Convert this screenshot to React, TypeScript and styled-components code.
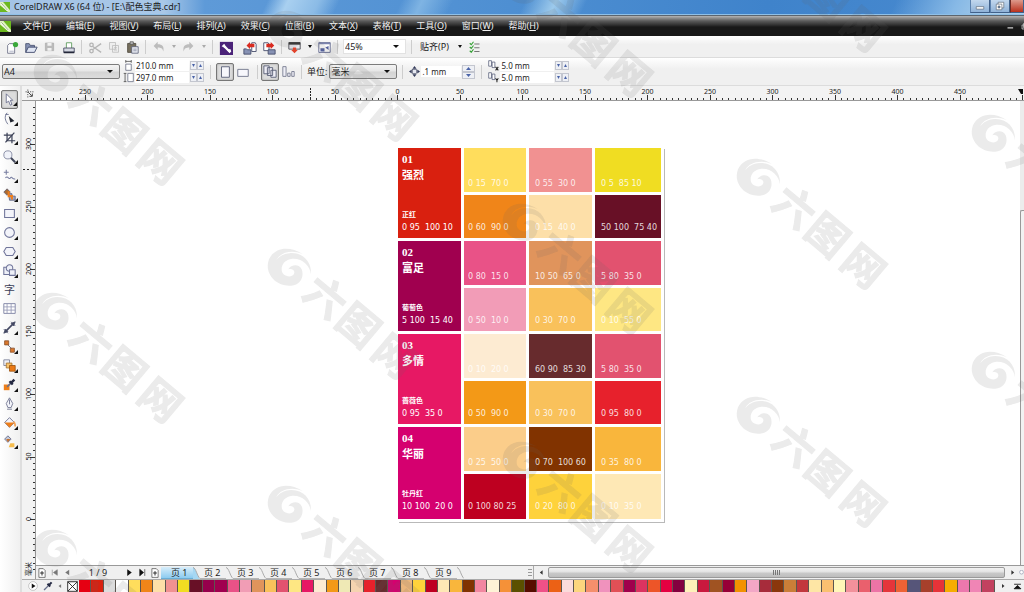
import React from "react";
import styled, { createGlobalStyle, css } from "styled-components";

const GlobalStyle = createGlobalStyle`
  * { box-sizing: border-box; }
  body { margin: 0; overflow: hidden; background: #f0f0f0; }
  body, button, input, select {
    font-family: "Noto Sans", "Noto Sans CJK SC", sans-serif;
    font-size: 9px;
    color: #1c1c1c;
  }
  button { border: 0; padding: 0; background: none; }
`;

/* ---------- icons ---------- */

const glyphs: Record<string, React.ReactNode> = {
  corel: (
    <>
      <rect width="16" height="16" fill="#6cb820" />
      <path d="M0 0h5l11 13v3h-3L0 5z" fill="#dff2c0" />
      <path d="M2 1l11 11-1 3L1 4z" fill="#fff" />
      <path d="M2 2l10 11" stroke="#5c8d2b" />
    </>
  ),
  newDoc: (
    <>
      <path d="M3 5l2-2h6v11H3z" fill="#fff" stroke="#6f7288" />
      <path d="M5 12h5" stroke="#c9cbd8" strokeWidth="2" />
      <circle cx="12" cy="4" r="3" fill="#3ba83b" />
    </>
  ),
  open: (
    <>
      <path d="M2 13V3h4l1 2h5v3" fill="#8792b4" stroke="#47506f" />
      <path d="M2 13l3-6h10l-3 6z" fill="#dfe5f3" stroke="#3d4668" />
    </>
  ),
  save: (
    <>
      <path d="M2 3h12v11H2z" fill="#bbb" stroke="#aaa" />
      <path d="M5 3h6v4H5zM5 10h6v4H5z" fill="#f1f1f1" />
    </>
  ),
  print: (
    <>
      <path d="M5 8V2h6v6" fill="#fff" stroke="#5b9a5b" />
      <path d="M2 8h12v5H2z" fill="#d5d8e2" stroke="#4b4f66" />
      <path d="M2 13h12" stroke="#25283a" strokeWidth="2" />
    </>
  ),
  cut: (
    <g fill="none" stroke="#b5b5b5" strokeWidth="1.5">
      <path d="M15 3L5 10M15 13L5 6" />
      <circle cx="4" cy="4.500" r="2" />
      <circle cx="4" cy="11.500" r="2" />
    </g>
  ),
  copy: (
    <g fill="#eee" stroke="#b9b9b9">
      <path d="M2 2h8v9H2zM6 6h8v9H6z" />
      <path d="M8 9h4M8 12h4" />
    </g>
  ),
  paste: (
    <>
      <path d="M2 3h10v11H2z" fill="#766f5d" stroke="#4c473c" />
      <path d="M5 1h4v3H5z" fill="#c9c9c9" stroke="#555" />
      <path d="M7 7h8v8H7z" fill="#e9ebf2" stroke="#5a5f78" />
      <path d="M9 10h4M9 12h4" stroke="#8a8fa5" />
    </>
  ),
  undo: <path d="M2 6l5-5v3c6 0 8 3 7 9-1-4-3-5-7-5v3z" fill="#bcbcbc" />,
  redo: <path d="M14 6L9 1v3C3 4 1 7 2 13c1-4 3-5 7-5v3z" fill="#bcbcbc" />,
  connect: (
    <>
      <rect x="1" y="1" width="15" height="15" fill="#4b2379" />
      <path d="M5 5l7 7" stroke="#fff" strokeWidth="2.500" />
      <path d="M3 6l3-3 2 4-1 1zM9 10l4-1 1 3-2 2z" fill="#fff" />
    </>
  ),
  importIcon: (
    <>
      <path d="M1 9h3l1 1h4v5H1z" fill="#8792b4" stroke="#454c6a" />
      <path d="M10 2h4l1 2v8h-5z" fill="#fff" stroke="#454c6a" />
      <path d="M13 3H8V1L4 5l4 4V7h5z" fill="#d92b20" />
    </>
  ),
  exportIcon: (
    <>
      <path d="M2 2h5l1 2v7H2z" fill="#fff" stroke="#454c6a" />
      <path d="M7 10h8v5H7z" fill="#8792b4" stroke="#454c6a" />
      <path d="M5 7h5v2l4-4-4-4v2H5z" fill="#d92b20" />
    </>
  ),
  launcher: (
    <>
      <path d="M1 2h14v8H1z" fill="#e8e9ee" stroke="#3d3d46" />
      <path d="M1 3h14" stroke="#333" strokeWidth="3" />
      <path d="M6 8h4v3h2l-4 4-4-4h2z" fill="#e2432c" />
    </>
  ),
  welcome: (
    <>
      <path d="M1 2h14v12H1z" fill="#fff" stroke="#4e5580" />
      <path d="M1 3h14" stroke="#7b83ae" strokeWidth="2" />
      <path d="M3 9h5v4H3zM9 8l4-2v5z" fill="#5360a0" />
    </>
  ),
  options: (
    <>
      <path d="M7 4h7M7 9h7M7 14h7" stroke="#777" strokeWidth="1.500" />
      <path d="M1 3l2 2 3-4M1 8l2 2 3-4M1 13l2 2 3-4" fill="none" stroke="#35a035" strokeWidth="1.500" />
    </>
  ),
  pageW: (
    <>
      <path d="M4 6h8v9H4z" fill="#fff" stroke="#555a72" />
      <path d="M4 2h8M4 0v4M12 0v4" stroke="#333" />
    </>
  ),
  pageH: (
    <>
      <path d="M7 2h8v12H7z" fill="#fff" stroke="#555a72" />
      <path d="M3 2v12M1 2h4M1 14h4" stroke="#333" />
    </>
  ),
  portrait: <path d="M4 2h9v12H4z" fill="#f7f7fc" stroke="#555a72" />,
  landscape: <path d="M2 5h12v8H2z" fill="#f7f7fc" stroke="#6d7188" />,
  allPages: (
    <g fill="#eeeef6" stroke="#555a72">
      <path d="M1 1h6v9H1zM5 3h6v9H5zM9 6h6v8H9z" />
    </g>
  ),
  curPage: (
    <g fill="#eeeef6" stroke="#6d7188">
      <path d="M1 2h4v12H1zM7 10h3v4H7zM12 8h3v6h-3z" />
    </g>
  ),
  nudge: (
    <>
      <path d="M8 0l3 4H5zM8 16l3-4H5zM0 8l4-3v6zM16 8l-4-3v6z" fill="#333a5a" />
      <rect x="5" y="5" width="6" height="6" fill="#e7e9f2" stroke="#555a72" />
    </>
  ),
  dupX: (
    <>
      <path d="M1 1h4v8H1zM6 3h4v8H6z" fill="#fff" stroke="#454c6a" />
      <path d="M11 10l4 5M15 10l-4 5" stroke="#222" strokeWidth="1.500" />
    </>
  ),
  dupY: (
    <>
      <path d="M1 1h4v8H1zM6 3h4v8H6z" fill="#fff" stroke="#454c6a" />
      <path d="M11 9l2 3 2-3M13 12v3" fill="none" stroke="#222" strokeWidth="1.500" />
    </>
  ),
  pick: <path d="M4 1l8 8H9l2 5-2 1-2-5-3 2z" fill="#fff" stroke="#5e6384" />,
  shape: (
    <>
      <path d="M5 1C1 6 3 11 6 15M3 3h4" fill="none" stroke="#5c6284" />
      <path d="M7 5l7 6-5 2z" fill="#20242f" />
    </>
  ),
  crop: (
    <g fill="none" stroke="#3b4056" strokeWidth="1.500">
      <path d="M5 2v10h10M1 5h10v10" />
      <path d="M3 14L14 2" />
    </g>
  ),
  zoom: (
    <>
      <path d="M9 9l6 6" stroke="#43485c" strokeWidth="2.500" />
      <circle cx="6" cy="6" r="5" fill="#f0f2f9" stroke="#777d98" />
    </>
  ),
  freehand: (
    <g fill="none" stroke="#777da0" strokeWidth="1.300">
      <path d="M4 1v6M1 4h6" />
      <path d="M3 11c3-4 4 3 6 0s3 3 6 1" />
    </g>
  ),
  smartFill: (
    <>
      <path d="M1 5l4-4 4 4-4 4z" fill="#a96a33" stroke="#5d5f75" />
      <path d="M7 7h4v3h4v5H8z" fill="#9fa7c6" stroke="#555a78" />
      <path d="M7 4v6h4v4" fill="none" stroke="#ef7e1b" strokeWidth="2.500" />
    </>
  ),
  rect: <path d="M2 3h12v10H2z" fill="#f3f4fa" stroke="#70759a" strokeWidth="1.300" />,
  ellipse: <circle cx="8" cy="8" r="6" fill="#f3f4fa" stroke="#70759a" strokeWidth="1.300" />,
  polygon: <path d="M4 3h8l3 5-3 5H4L1 8z" fill="#f3f4fa" stroke="#70759a" strokeWidth="1.300" />,
  shapes: (
    <g fill="#eef0f8" stroke="#70759a" strokeWidth="1.300">
      <path d="M1 4h8v9H1z" />
      <circle cx="8" cy="5" r="4" />
      <path d="M8 7h7v7H8z" />
    </g>
  ),
  table: (
    <>
      <path d="M1 2h14v12H1z" fill="#fff" stroke="#70759a" />
      <path d="M1 6h14M1 10h14M5 2v12M10 2v12" stroke="#9296b4" />
    </>
  ),
  dimension: (
    <>
      <path d="M3 13L13 3" stroke="#434863" strokeWidth="2" />
      <path d="M1 10l5 5M10 1l5 5M1 15l2-5 3 3zM15 1l-2 5-3-3z" stroke="#434863" fill="#434863" />
    </>
  ),
  connector: (
    <>
      <path d="M4 4l8 8" stroke="#5a5f78" />
      <path d="M2 1h5v5H2zM9 10h5v5H9z" fill="#d9772c" stroke="#87502b" />
    </>
  ),
  interactive: (
    <>
      <path d="M1 1h7v7H1z" fill="#eef0f8" stroke="#777c96" />
      <path d="M4 5h7v6H4z" fill="#f7c36e" stroke="#a3702b" />
      <path d="M8 8h7v7H8z" fill="#ea7915" stroke="#9a510d" />
    </>
  ),
  eyedropper: (
    <>
      <path d="M1 8h7v7H1z" fill="#ee7f1a" />
      <path d="M5 11l6-6" stroke="#6a7089" strokeWidth="2" />
      <path d="M8 4l4 4M10 6l4-4" stroke="#242942" strokeWidth="3" />
    </>
  ),
  dropper: (
    <>
      <path d="M3 13l7-7" stroke="#69708b" strokeWidth="2" />
      <path d="M8 4l4 4M10 6l4-4" stroke="#242942" strokeWidth="3" />
    </>
  ),
  pen: (
    <>
      <path d="M8 1l4 7-2 5H6L4 8zM5 15h6" fill="#f3f4fa" stroke="#666b88" />
      <path d="M8 3v6" stroke="#666b88" />
    </>
  ),
  fill: (
    <>
      <path d="M2 8l6-6 6 6-6 6z" fill="#f3f4fa" stroke="#5e6384" />
      <path d="M2 8h12l-6 6z" fill="#ee7f1a" />
      <path d="M13 7c2 1 2 3 2 6" stroke="#f3a052" strokeWidth="2" fill="none" />
    </>
  ),
  meshFill: (
    <>
      <path d="M2 5l4-4 4 4-4 4z" fill="#c5cad9" stroke="#5e6384" />
      <path d="M4 5h5l-3 4z" fill="#c4712f" />
      <path d="M7 15l2-5h5v5z" fill="#f6bd4e" />
    </>
  ),
  origin: (
    <>
      <path d="M5 1v14M1 5h14" stroke="#333" strokeWidth="1.500" strokeDasharray="2 2" />
      <path d="M6 6l6 6M13 8v5H8" stroke="#222" strokeWidth="1.500" fill="none" />
    </>
  ),
  addPage: (
    <>
      <path d="M3 1h7l3 3v11H3z" fill="#fff" stroke="#333" />
      <path d="M8 5v7M5 8h6" stroke="#222" strokeWidth="1.500" />
    </>
  ),
  first: <path d="M4 3v10M13 3v10L6 8z" fill="#777" stroke="#777" />,
  prev: <path d="M11 3v10L4 8z" fill="#777" />,
  next: <path d="M4 2v12l8-6z" fill="#111" />,
  last: <path d="M12 2v12M3 2v12l7-6z" fill="#111" stroke="#111" />,
  left: <path d="M10 4v8L5 8z" fill="#333" />,
  right: <path d="M6 4v8l5-4z" fill="#333" />,
  play: (
    <>
      <circle cx="8" cy="8" r="7" fill="#fff" stroke="#aaa" />
      <path d="M6 4v8l6-4z" fill="#111" />
    </>
  ),
  none: <path d="M1 1h14v14H1zM1 1l14 14M15 1L1 15" fill="#fff" stroke="#222" strokeWidth="1.300" />,
  expand: <path d="M2 4h12M8 6l6 6H2z" fill="#111" stroke="#111" strokeWidth="1.500" />,
  magnifier: <circle cx="8" cy="7" r="6" fill="#fff" stroke="#6a7090" strokeWidth="1.500" />,
  min: <path d="M2 9h12v4H2z" fill="#fff" stroke="#55606e" />,
  restore: (
    <>
      <path d="M5 2h9v9H5z" fill="#fff" stroke="#55606e" />
      <path d="M2 5h9v9H2z" fill="#fff" stroke="#55606e" />
      <path d="M5 8h3v3H5z" fill="#6d8db3" stroke="#55606e" />
    </>
  ),
  docMin: <path d="M4 11h9" stroke="#ccc" strokeWidth="2" />,
  docRestore: <path d="M5 3h9v8H5zM2 6h8v8H2z" fill="#333" stroke="#ccc" strokeWidth="1.500" />,
};

const Icon = ({ name, size = 14 }: { name: string; size?: number }) => (
  <svg width={size} height={size} viewBox="0 0 16 16" fill="none" aria-hidden="true">
    {glyphs[name]}
  </svg>
);

const Caret = ({ up, color = "#111", w = 5 }: { up?: boolean; color?: string; w?: number }) => (
  <svg width={w} height={3} viewBox="0 0 6 3" preserveAspectRatio="none" aria-hidden="true">
    <path d={up ? "M0 3h6L3 0z" : "M0 0h6L3 3z"} fill={color} />
  </svg>
);

/* ---------- frame ---------- */

const Window = styled.div`
  display: flex;
  flex-direction: column;
  height: 100vh;
  overflow: hidden;
  background: #f0f0f0;
`;

const TitleBar = styled.header`
  display: flex;
  align-items: center;
  height: 15px;
  flex: none;
  border-bottom: 1px solid #8fc0e8;
  background:
    linear-gradient(115deg, transparent 26%, #a9d0f0 28%, #8bbbe6 31%, transparent 33%, transparent 39%, #7fb4e3 41%, transparent 44%, transparent 51%, #9dcaec 54%, transparent 57%, transparent 87%, #87b9e6 93%, #a9cdea 97%),
    linear-gradient(90deg, #a3c3e6, #a9c8e8 16%, #5e9ad8 20%, #4e8fd2 50%, #3f83cb 75%, #4a8bd0);
`;

const Title = styled.h1`
  flex: 1;
  margin: 0 0 0 4px;
  font-size: 9px;
  line-height: 14px;
  font-weight: 400;
  white-space: pre;
`;

const WinButton = styled.button<{ $close?: boolean }>`
  display: grid;
  place-items: center;
  align-self: flex-start;
  width: ${(p) => (p.$close ? 14 : 20)}px;
  height: 13px;
  border: 1px solid #41618a;
  border-top: 0;
  border-left: ${(p) => (p.$close ? "1px solid #6d2b24" : "1px solid #5d82ae")};
  background: ${(p) => (p.$close ? "linear-gradient(#dd9a8c, #b9301c)" : "linear-gradient(#c3d8ee, #8fb2d8)")};
`;

const MenuBar = styled.nav`
  display: flex;
  align-items: center;
  height: 21px;
  flex: none;
  border-top: 1px solid #5c656e;
  background: linear-gradient(#b4b4b4, #5a5a5a 25%, #303030 45%, #181818 55%, #181818);
`;

const MenuList = styled.div`
  display: flex;
  flex: 1;
  gap: 15px;
  margin-left: 12px;
`;

const MenuItem = styled.button`
  color: #f0f0f0;
  line-height: 14px;
  white-space: nowrap;
`;

const Bar = styled.div<{ $h: number }>`
  display: flex;
  align-items: center;
  flex: none;
  height: ${(p) => p.$h}px;
  padding-left: 2px;
  border-bottom: 1px solid #dcdcdc;
  background: linear-gradient(#fff, #f0f0f0 40%);
`;

const Separator = styled.span`
  flex: none;
  width: 7px;
  height: 14px;
  background: linear-gradient(#cdcdcd, #cdcdcd) center / 1px 100% no-repeat;
`;

const ToolButton = styled.button<{ $w?: number }>`
  display: grid;
  place-items: center;
  flex: none;
  width: ${(p) => p.$w ?? 19}px;
  height: 12px;
`;

const pressed = css`
  border: 1px solid #777;
  border-radius: 2px;
  background: #dcdcdc;
  box-shadow: inset 0 0 2px #999;
`;

const ToggleButton = styled.button<{ $on?: boolean }>`
  display: grid;
  place-items: center;
  flex: none;
  width: 18px;
  height: 18px;
  ${(p) => p.$on && pressed}
`;

const Space = styled.span<{ $w: number }>`
  flex: none;
  width: ${(p) => p.$w}px;
`;

const TextButton = styled.button`
  display: flex;
  align-items: center;
  line-height: 14px;
  white-space: nowrap;
`;

/* ---------- form fields ---------- */

const SelectBox = styled.span<{ $w: number; $raised?: boolean }>`
  display: grid;
  grid-template-columns: 1fr 12px;
  align-items: center;
  flex: none;
  width: ${(p) => p.$w}px;
  height: 15px;
  border: 1px solid ${(p) => (p.$raised ? "#7c7c7c" : "#e2e2e2")};
  border-radius: ${(p) => (p.$raised ? 2 : 0)}px;
  background: ${(p) => (p.$raised ? "linear-gradient(#f4f4f4, #e6e6e6 48%, #d4d4d4 52%, #dcdcdc)" : "#fff")};
  & > select {
    grid-area: 1 / 1 / 2 / 3;
    appearance: none;
    width: 100%;
    height: 13px;
    padding: 0 12px 0 1px;
    border: 0;
    background: none;
  }
  & > svg { grid-area: 1 / 2; pointer-events: none; }
`;

const Picker = ({ label, value, options, w, raised }: { label: string; value: string; options: string[]; w: number; raised?: boolean }) => (
  <SelectBox $w={w} $raised={raised}>
    <select aria-label={label} defaultValue={value}>
      {options.map((o) => <option key={o}>{o}</option>)}
    </select>
    <Caret w={6} />
  </SelectBox>
);

const FieldPair = styled.div`
  display: flex;
  flex-direction: column;
`;

const Field = styled.label<{ $w: number }>`
  display: flex;
  align-items: center;
  height: 12px;
  & > input {
    width: ${(p) => p.$w}px;
    height: 11px;
    margin-left: 1px;
    padding: 0 1px;
    border: 0;
    background: #fff;
    font-size: 8px;
    line-height: 11px;
  }
`;

const SpinnerBox = styled.span<{ $stacked?: boolean }>`
  display: flex;
  flex-direction: ${(p) => (p.$stacked ? "column" : "row")};
  margin-left: 1px;
  & > button {
    display: grid;
    place-items: center;
    width: ${(p) => (p.$stacked ? 13 : 7)}px;
    height: ${(p) => (p.$stacked ? 7 : 9)}px;
    border: 1px solid #c3c6cf;
    background: #eef0f5;
  }
`;

const Spinner = ({ stacked }: { stacked?: boolean }) => {
  const up = <button key="u" type="button" aria-label="增加"><Caret up color="#4a63a8" w={stacked ? 5 : 3} /></button>;
  const down = <button key="d" type="button" aria-label="减少"><Caret color="#4a63a8" w={stacked ? 5 : 3} /></button>;
  return <SpinnerBox $stacked={stacked}>{stacked ? [up, down] : [down, up]}</SpinnerBox>;
};

const NumberField = ({ icon, label, value, w, stacked }: { icon: string; label: string; value: string; w: number; stacked?: boolean }) => (
  <Field $w={w}>
    <Icon name={icon} size={11} />
    <input aria-label={label} defaultValue={value} />
    <Spinner stacked={stacked} />
  </Field>
);

/* ---------- workspace ---------- */

const Workspace = styled.div`
  display: flex;
  flex: 1;
  min-height: 0;
`;

const Toolbox = styled.aside`
  display: flex;
  flex-direction: column;
  flex: none;
  width: 22px;
  padding: 4px 0 0 1px;
  border-right: 2px solid #dedede;
  background: linear-gradient(90deg, #fff, #f0f0f0);
`;

const Tool = styled.button<{ $on?: boolean }>`
  display: grid;
  place-items: center;
  position: relative;
  flex: none;
  width: 17px;
  height: 19px;
  font-size: 11px;
  line-height: 14px;
  color: #3c4058;
  ${(p) => p.$on && pressed}
  & > .flyout { position: absolute; right: 0; bottom: 2px; }
`;

const Main = styled.div`
  display: flex;
  flex-direction: column;
  flex: 1;
  min-width: 0;
`;

const RulerRow = styled.div`
  display: flex;
  flex: none;
  height: 15px;
  border-bottom: 1px solid #999;
  background: #f3f3f3;
`;

const Corner = styled.div`
  display: grid;
  place-items: center;
  width: 14px;
`;

const RulerTop = styled.svg`
  flex: 1;
  min-width: 0;
  height: 14px;
`;

const Body = styled.div`
  display: flex;
  flex: 1;
  min-height: 0;
`;

const RulerSide = styled.svg`
  flex: none;
  width: 14px;
  height: 100%;
  border-right: 1px solid #999;
  background: #f3f3f3;
`;

const rulerFont = { fontFamily: '"Noto Sans", "Noto Sans CJK SC", sans-serif', fontSize: 7, fill: "#222" } as const;

const STEP = 62.5;

const HorizontalRuler = () => {
  const zero = 361.5;
  const ticks = Array.from({ length: 158 }, (_, i) => i - 57);
  return (
    <RulerTop aria-label="水平标尺">
      {ticks.map((i) => {
        const x = Math.floor(zero + (i * STEP) / 10);
        const len = i % 10 === 0 ? 5 : 2;
        return <rect key={i} x={x} y={14 - len} width={1} height={len} fill="#333" />;
      })}
      {ticks.filter((i) => i % 10 === 0 && i < 100).map((i) => (
        <text key={i} x={zero + (i * STEP) / 10} y={8} textAnchor="middle" {...rulerFont}>{Math.abs(i * 5)}</text>
      ))}
      <path d="M274.500 2v12" stroke="#222" strokeDasharray="2 1" />
      <path d="M982 3h5v5h-2z" fill="#111" />
    </RulerTop>
  );
};

const VerticalRuler = () => {
  const zero = 418;
  const ticks = Array.from({ length: 76 }, (_, i) => i - 8);
  return (
    <RulerSide aria-label="垂直标尺">
      {ticks.map((i) => {
        const y = Math.round(zero - (i * STEP) / 10);
        const len = i % 10 === 0 ? 5 : 2;
        return <rect key={i} x={13 - len} y={y} width={len} height={1} fill="#333" />;
      })}
      {ticks.filter((i) => i % 10 === 0).map((i) => {
        const y = zero - (i * STEP) / 10;
        return <text key={i} x={0} y={0} textAnchor="middle" transform={`translate(9 ${y}) rotate(-90)`} {...rulerFont}>{i * 5}</text>;
      })}
      <text textAnchor="middle" transform="translate(9 468) rotate(-90)" {...rulerFont}>毫米</text>
      <path d="M1 68.500h12" stroke="#222" strokeDasharray="2 2" />
    </RulerSide>
  );
};

const Stage = styled.div`
  display: flex;
  flex-direction: column;
  flex: 1;
  min-width: 0;
`;

const CanvasRow = styled.div`
  display: flex;
  flex: 1;
  min-height: 0;
`;

const Canvas = styled.main`
  flex: 1;
  padding: 47px 0 0 362px;
  background: #fff;
  overflow: hidden;
`;

const VScroll = styled.div`
  flex: none;
  width: 4px;
  padding-top: 109px;
  background: #ececec;
  &::after {
    content: "";
    display: block;
    height: 100%;
    border: 1px solid #999;
    border-right: 0;
    border-radius: 2px 0 0 0;
    background: #f2f2f2;
  }
`;

/* ---------- colour sheet ---------- */

const Sheet = styled.div`
  display: grid;
  gap: 3px;
  width: 266px;
  padding: 0 3px 3px 0;
  background: #fff;
  box-shadow: 1px 1px 0 #b9b9b9;
`;

const Scheme = styled.section<{ $last: boolean }>`
  display: grid;
  grid-template-columns: 63px 62px 63px 66px;
  grid-template-rows: 44px ${(p) => (p.$last ? 45 : 43)}px;
  gap: 3px;
`;

const Lead = styled.div<{ $c: string }>`
  grid-row: span 2;
  display: flex;
  flex-direction: column;
  padding: 5px 4px 0;
  background: ${(p) => p.$c};
  color: #fff;
`;

const Num = styled.span`
  font: bold 11px/12px "Liberation Serif", serif;
`;

const Name = styled.h2`
  margin: 2px 0 0;
  font: bold 11px/14px "Noto Sans CJK SC", sans-serif;
`;

const Sub = styled.span`
  margin-top: 28px;
  font: bold 7px/10px "Noto Sans CJK SC", sans-serif;
`;

const Code = styled.span`
  font: 8px/10px "DejaVu Sans", sans-serif;
  white-space: pre;
`;

const LeadCode = styled(Code)`
  margin-top: 4px;
`;

const Swatch = styled.div<{ $c: string; $low: boolean; $near: boolean }>`
  padding: ${(p) => (p.$low ? 28 : 31)}px 0 0 ${(p) => (p.$near ? 4 : 6)}px;
  line-height: 0;
  background: ${(p) => p.$c};
  color: rgba(255, 255, 255, 0.85);
`;

type SchemeData = { num: string; name: string; sub: string; code: string; color: string; tiles: [string, string][] };

const schemes: SchemeData[] = [
  {
    num: "01", name: "强烈", sub: "正红", code: "0 95  100 10", color: "#d9200f",
    tiles: [["#ffdd5c", "0 15  70 0"], ["#f19191", "0 55  30 0"], ["#f0dd22", "0 5  85 10"], ["#f08519", "0 60  90 0"], ["#fddfa8", "0 15  40 0"], ["#681026", "50 100  75 40"]],
  },
  {
    num: "02", name: "富足", sub: "葡萄色", code: "5 100  15 40", color: "#a0004f",
    tiles: [["#e95287", "0 80  15 0"], ["#e0945c", "10 50  65 0"], ["#e2526f", "5 80  35 0"], ["#f29cb7", "0 50  10 0"], ["#f9c15b", "0 30  70 0"], ["#fee783", "0 10  55 0"]],
  },
  {
    num: "03", name: "多情", sub: "蔷薇色", code: "0 95  35 0", color: "#e71864",
    tiles: [["#fdebd2", "0 10  20 0"], ["#672b2d", "60 90  85 30"], ["#e2526f", "5 80  35 0"], ["#f39917", "0 50  90 0"], ["#f9c15b", "0 30  70 0"], ["#e7212c", "0 95  80 0"]],
  },
  {
    num: "04", name: "华丽", sub: "牡丹红", code: "10 100  20 0", color: "#d5006f",
    tiles: [["#fbcd8a", "0 25  50 0"], ["#813300", "0 70  100 60"], ["#f9b63c", "0 35  80 0"], ["#be0020", "0 100 80 25"], ["#fed23b", "0 20  80 0"], ["#fee8b5", "0 10  35 0"]],
  },
];

const ColourSheet = () => (
  <Sheet>
    {schemes.map((s, n) => (
      <Scheme key={s.num} $last={n === schemes.length - 1}>
        <Lead $c={s.color}>
          <Num>{s.num}</Num>
          <Name>{s.name}</Name>
          <Sub>{s.sub}</Sub>
          <LeadCode>{s.code}</LeadCode>
        </Lead>
        {s.tiles.map(([c, code], i) => (
          <Swatch key={i} $c={c} $low={i > 2} $near={i % 3 === 0}><Code>{code}</Code></Swatch>
        ))}
      </Scheme>
    ))}
  </Sheet>
);

/* ---------- page navigator ---------- */

const BottomRow = styled.div`
  display: flex;
  flex: none;
  height: 14px;
  border-top: 1px solid #999;
  background: #f0f0f0;
`;

const PageNav = styled.nav`
  display: flex;
  align-items: center;
  flex: none;
  width: 498px;
  border-right: 1px solid #aaa;
`;

const PageCount = styled.span`
  width: 50px;
  text-align: center;
  font-size: 9px;
  line-height: 12px;
  white-space: pre;
`;

const Tab = styled.button<{ $on?: boolean }>`
  display: flex;
  align-items: center;
  height: 12px;
  & > span {
    width: ${(p) => (p.$on ? 32 : 26)}px;
    height: 12px;
    padding-left: ${(p) => (p.$on ? 10 : 4)}px;
    text-align: left;
    font-size: 9px;
    line-height: 11px;
    white-space: pre;
    background: ${(p) => (p.$on ? "linear-gradient(#d7edfa, #8ccbf0)" : "none")};
    border-bottom: 1px solid ${(p) => (p.$on ? "#6aaed6" : "#b5b5b5")};
  }
`;

const Grip = styled.span`
  width: 4px;
  height: 10px;
  margin-left: auto;
  margin-right: 1px;
  background: radial-gradient(circle, #999 1px, transparent 1px) 0 0 / 2px 3px;
`;

const HScroll = styled.div`
  display: flex;
  align-items: center;
  flex: 1;
  min-width: 0;
`;

const Thumb = styled.div`
  display: grid;
  place-items: center;
  flex: 1;
  height: 11px;
  border: 1px solid #999;
  border-radius: 2px;
  background: linear-gradient(#f3f3f3, #e2e2e2 45%, #c9c9c9 55%, #bdbdbd);
`;

const Palette = styled.footer`
  display: flex;
  align-items: center;
  flex: none;
  height: 13px;
  border-top: 1px solid #aaa;
`;

const Chips = styled.div`
  display: flex;
  flex: 1;
  min-width: 0;
  height: 12px;
`;

const Chip = styled.button<{ $c: string }>`
  flex: 1;
  min-width: 0;
  border-right: 1px solid #5c5650;
  background: ${(p) => p.$c};
`;

const paletteColours = (
  "e60012 d9200f dcdcdc ffffff ffdd5c f08519 fddfa8 f19191 f1dd22 681026 96004c a0004f e95287 f19db5 e0945c f9c15b e2526f fee783 e71864 fdebd2 f39917 " +
  "efe9b5 f5d3b0 e6212b 672b2d d5006f ebb67c fed23b be0020 fee8b5 f9b63c 813300 f287a0 fef3d6 f59138 5b5000 560d00 ef5188 ec6115 fadbdb fcd67e f58f6c f092bd e15056 a0004c dc3360 ed5528 e50041 84003f " +
  "fef1b9 c9193e a05322 970037 f29200 f2a7c6 a72c3b 8a370c ca7e38 c2373d fee6a5 fac070 fff7b8 f2919b ea606d ec74a6 e5353a ee6234 565579 a7402b e63338 f6ad00 ec78ad f085b5 c2415f"
).split(" ");

/* ---------- watermark ---------- */

const WatermarkLayer = styled.svg`
  position: fixed;
  inset: 0;
  width: 100%;
  height: 100%;
  pointer-events: none;
`;

const markSpots = [
  [33, 54], [33, 292], [33, 529], [267, 10], [267, 248], [267, 485],
  [502, -34], [502, 203], [502, 441], [736, -79], [736, 158], [736, 396], [971, 114], [971, 351],
];

const Watermark = () => (
  <WatermarkLayer aria-hidden="true">
    {markSpots.map(([x, y]) => (
      <g key={`${x},${y}`} transform={`translate(${x} ${y})`} fill="#666" opacity={0.13}>
        <path
          transform="translate(-6 -58) scale(.3333)"
          d="M125 192C85 166 40 172 24 208C8 250 45 290 90 287C120 285 130 258 122 238C114 220 90 224 82 238C92 234 101 240 100 248C98 260 82 262 72 256C54 246 60 212 90 207C122 202 146 226 150 252C152 215 126 188 90 189C66 191 56 199 46 210C58 188 90 178 125 192Z"
        />
        <g fontFamily='"Noto Sans CJK SC", sans-serif' fontWeight={700} fontSize={41} textAnchor="middle" stroke="#666" strokeWidth={1}>
          <text transform="translate(58 50) rotate(40)" y={14}>六</text>
          <text transform="translate(91 78) rotate(40)" y={14}>图</text>
          <text transform="translate(127 109) rotate(40)" y={14}>网</text>
        </g>
      </g>
    ))}
  </WatermarkLayer>
);

/* ---------- data ---------- */

const menus: [string, string][] = [
  ["文件", "F"], ["编辑", "E"], ["视图", "V"], ["布局", "L"], ["排列", "A"], ["效果", "C"],
  ["位图", "B"], ["文本", "X"], ["表格", "T"], ["工具", "O"], ["窗口", "W"], ["帮助", "H"],
];

const tools: [string, string][] = [
  ["pick", "选择"], ["shape", "形状"], ["crop", "裁剪"], ["zoom", "缩放"], ["freehand", "手绘"], ["smartFill", "智能填充"],
  ["rect", "矩形"], ["ellipse", "椭圆形"], ["polygon", "多边形"], ["shapes", "基本形状"], ["text", "文本"], ["table", "表格"],
  ["dimension", "度量"], ["connector", "连接器"], ["interactive", "调和"], ["eyedropper", "滴管"], ["pen", "轮廓笔"],
  ["fill", "填充"], ["meshFill", "交互式填充"],
];

const BarButton = ({ icon, label, size = 14 }: { icon: string; label: string; size?: number }) => (
  <ToolButton type="button" aria-label={label}><Icon name={icon} size={size} /></ToolButton>
);

const Drop = ({ label, dim }: { label: string; dim?: boolean }) => (
  <ToolButton type="button" $w={11} aria-label={label}><Caret color={dim ? "#aaa" : "#111"} w={4} /></ToolButton>
);

export default function App() {
  return (
    <Window>
      <GlobalStyle />
      <TitleBar>
        <Icon name="corel" size={10} />
        <Title>CorelDRAW X6 (64 位) - [E:\配色宝典.cdr]</Title>
        <WinButton type="button" aria-label="最小化"><Icon name="min" size={10} /></WinButton>
        <WinButton type="button" aria-label="还原"><Icon name="restore" size={10} /></WinButton>
        <WinButton type="button" aria-label="关闭" $close />
      </TitleBar>
      <MenuBar>
        <Icon name="corel" size={11} />
        <MenuList>
          {menus.map(([t, k]) => <MenuItem key={k} type="button">{t}(<u>{k}</u>)</MenuItem>)}
        </MenuList>
        <Icon name="docMin" size={10} />
        <Space $w={6} />
        <Space $w={3}><Icon name="docRestore" size={8} /></Space>
      </MenuBar>
      <Bar $h={22}>
        <BarButton icon="newDoc" label="新建" />
        <BarButton icon="open" label="打开" />
        <BarButton icon="save" label="保存" size={11} />
        <BarButton icon="print" label="打印" />
        <Separator />
        <BarButton icon="cut" label="剪切" />
        <BarButton icon="copy" label="复制" size={12} />
        <BarButton icon="paste" label="粘贴" size={13} />
        <Separator />
        <BarButton icon="undo" label="撤消" size={13} />
        <Drop label="撤消列表" dim />
        <BarButton icon="redo" label="重做" size={13} />
        <Drop label="重做列表" dim />
        <Separator />
        <BarButton icon="connect" label="连接" />
        <Space $w={5} />
        <BarButton icon="importIcon" label="导入" />
        <BarButton icon="exportIcon" label="导出" />
        <Separator />
        <BarButton icon="launcher" label="应用程序启动器" size={13} />
        <Drop label="启动器列表" />
        <BarButton icon="welcome" label="欢迎屏幕" size={13} />
        <Separator />
        <Space $w={2} />
        <Picker label="缩放级别" value="45%" options={["45%", "100%", "200%"]} w={63} />
        <Space $w={2} />
        <Separator />
        <Space $w={5} />
        <TextButton type="button">贴齐(P)</TextButton>
        <Space $w={6} />
        <Drop label="贴齐列表" />
        <BarButton icon="options" label="选项" size={12} />
      </Bar>
      <Bar $h={28}>
        <Picker label="页面大小" value="A4" options={["A4", "A3", "Letter"]} w={118} raised />
        <Space $w={3} />
        <FieldPair>
          <NumberField icon="pageW" label="页面宽度" value="210.0 mm" w={54} />
          <NumberField icon="pageH" label="页面高度" value="297.0 mm" w={54} />
        </FieldPair>
        <Space $w={3} />
        <Separator />
        <Space $w={2} />
        <ToggleButton type="button" $on aria-label="纵向"><Icon name="portrait" /></ToggleButton>
        <ToggleButton type="button" aria-label="横向"><Icon name="landscape" /></ToggleButton>
        <Space $w={2} />
        <Separator />
        <ToggleButton type="button" $on aria-label="所有页面"><Icon name="allPages" /></ToggleButton>
        <ToggleButton type="button" aria-label="当前页面"><Icon name="curPage" size={13} /></ToggleButton>
        <Space $w={1} />
        <Separator />
        <Space $w={2} />
        <span>单位:</span>
        <Space $w={2} />
        <Picker label="单位" value="毫米" options={["毫米", "厘米", "英寸"]} w={68} raised />
        <Space $w={2} />
        <Separator />
        <Space $w={3} />
        <NumberField icon="nudge" label="微调距离" value=".1 mm" w={40} stacked />
        <Space $w={3} />
        <Separator />
        <Space $w={3} />
        <FieldPair>
          <NumberField icon="dupX" label="再制距离 X" value="5.0 mm" w={54} />
          <NumberField icon="dupY" label="再制距离 Y" value="5.0 mm" w={54} />
        </FieldPair>
      </Bar>
      <Workspace>
        <Toolbox>
          {tools.map(([id, label], i) => (
            <Tool key={id} type="button" $on={i === 0} aria-label={label}>
              {id === "text" ? "字" : <Icon name={id} size={13} />}
              {id !== "text" && id !== "table" && (
                <svg className="flyout" width="4" height="4" aria-hidden="true"><path d="M4 0v4H0z" fill="#111" /></svg>
              )}
            </Tool>
          ))}
        </Toolbox>
        <Main>
          <RulerRow>
            <Corner><Icon name="origin" size={9} /></Corner>
            <HorizontalRuler />
          </RulerRow>
          <Body>
            <VerticalRuler />
            <Stage>
              <CanvasRow>
                <Canvas><ColourSheet /></Canvas>
                <VScroll />
              </CanvasRow>
              <BottomRow>
                <PageNav>
                  <ToolButton type="button" $w={11} aria-label="添加页"><Icon name="addPage" size={10} /></ToolButton>
                  <ToolButton type="button" $w={14} aria-label="第一页"><Icon name="first" size={9} /></ToolButton>
                  <ToolButton type="button" $w={12} aria-label="上一页"><Icon name="prev" size={9} /></ToolButton>
                  <PageCount>1 / 9</PageCount>
                  <ToolButton type="button" $w={13} aria-label="下一页"><Icon name="next" size={9} /></ToolButton>
                  <ToolButton type="button" $w={12} aria-label="最后一页"><Icon name="last" size={9} /></ToolButton>
                  <ToolButton type="button" $w={13} aria-label="在后添加页"><Icon name="addPage" size={10} /></ToolButton>
                  {Array.from({ length: 9 }, (_, i) => (
                    <Tab key={i} type="button" $on={i === 0}>
                      <span>页 {i + 1}</span>
                      <svg width="7" height="12" aria-hidden="true">
                        {i === 0 && <path d="M0 0C3 1 4 9 7 12H0z" fill="#a5d7f3" />}
                        <path d="M0 0.500C3 1 4 9 7 11.500" fill="none" stroke="#aaa" />
                      </svg>
                    </Tab>
                  ))}
                  <Grip />
                </PageNav>
                <HScroll>
                  <ToolButton type="button" $w={14} aria-label="向左滚动"><Icon name="left" size={9} /></ToolButton>
                  <Thumb>
                    <svg width="7" height="5" aria-hidden="true"><path d="M.5 0v5M2.500 0v5M4.500 0v5M6.500 0v5" stroke="#777" /></svg>
                  </Thumb>
                  <ToolButton type="button" $w={14} aria-label="向右滚动"><Icon name="right" size={9} /></ToolButton>
                  <Icon name="magnifier" size={5} />
                </HScroll>
              </BottomRow>
            </Stage>
          </Body>
          <Palette>
            <Space $w={4} />
            <ToolButton type="button" $w={14} aria-label="调色板菜单"><Icon name="play" size={10} /></ToolButton>
            <ToolButton type="button" $w={14} aria-label="滴管"><Icon name="dropper" size={11} /></ToolButton>
            <ToolButton type="button" $w={12} aria-label="向左"><Icon name="prev" size={6} /></ToolButton>
            <ToolButton type="button" $w={13} aria-label="无填充"><Icon name="none" size={11} /></ToolButton>
            <Chips>
              {paletteColours.map((c, i) => <Chip key={i} type="button" $c={`#${c}`} aria-label={`#${c}`} />)}
            </Chips>
            <ToolButton type="button" $w={15} aria-label="向右"><Icon name="right" size={8} /></ToolButton>
            <ToolButton type="button" $w={14} aria-label="展开调色板"><Icon name="expand" size={9} /></ToolButton>
          </Palette>
        </Main>
      </Workspace>
      <Watermark />
    </Window>
  );
}
